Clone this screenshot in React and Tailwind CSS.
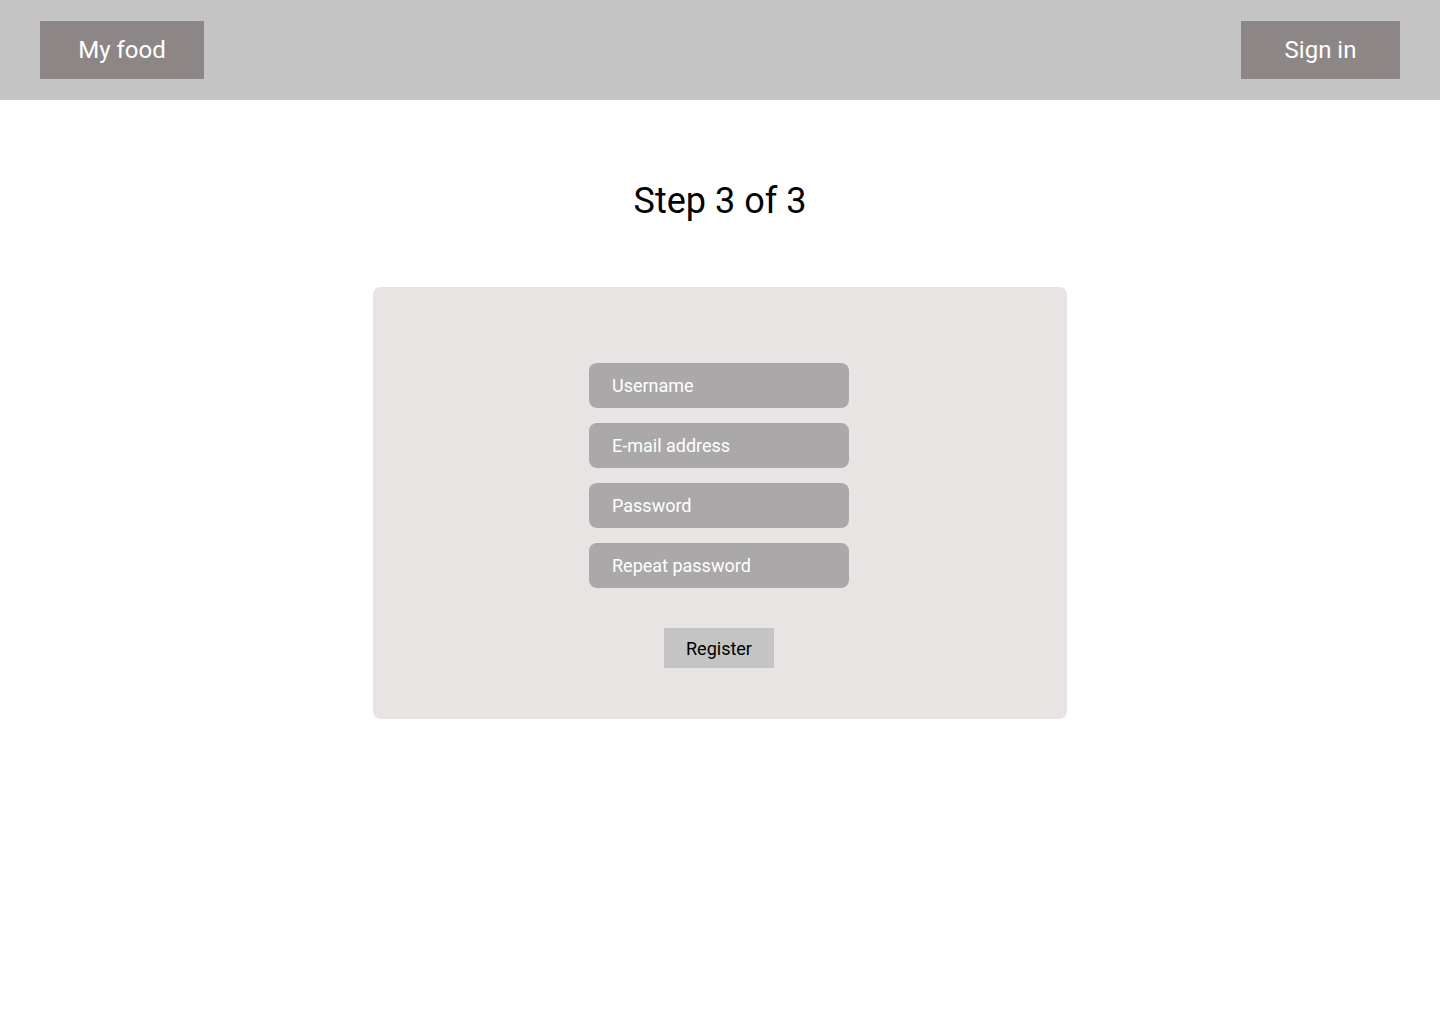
export default function App() {
  return (
    <div className="min-h-screen bg-white font-['Roboto',sans-serif]">
      <header className="h-[100px] bg-[#c4c4c4] flex items-center justify-between px-10">
        <button className="w-[164px] h-[58px] bg-[#8c8786] text-white text-[24px]">My food</button>
        <button className="w-[159px] h-[58px] bg-[#8c8786] text-white text-[24px]">Sign in</button>
      </header>

      <h1 className="mt-[80px] text-center text-[36px] leading-[42px] text-black">Step 3 of 3</h1>

      <div className="mt-[65px] mx-auto w-[694px] h-[432px] bg-[#e8e4e3] rounded-lg flex flex-col items-center pt-[76px]">
        <form className="flex flex-col gap-[15px] mr-[2px]">
          {["Username", "E-mail address", "Password", "Repeat password"].map((p) => (
            <input
              key={p}
              placeholder={p}
              type={p.includes("assword") ? "password" : "text"}
              className="w-[260px] h-[45px] rounded-lg bg-[#aaa8a8] px-[23px] text-[18px] text-white placeholder:text-white focus:outline-none"
            />
          ))}
        </form>
        <button className="mt-10 mr-[2px] w-[110px] h-10 bg-[#c4c4c4] text-[18px] text-black">Register</button>
      </div>
    </div>
  );
}
